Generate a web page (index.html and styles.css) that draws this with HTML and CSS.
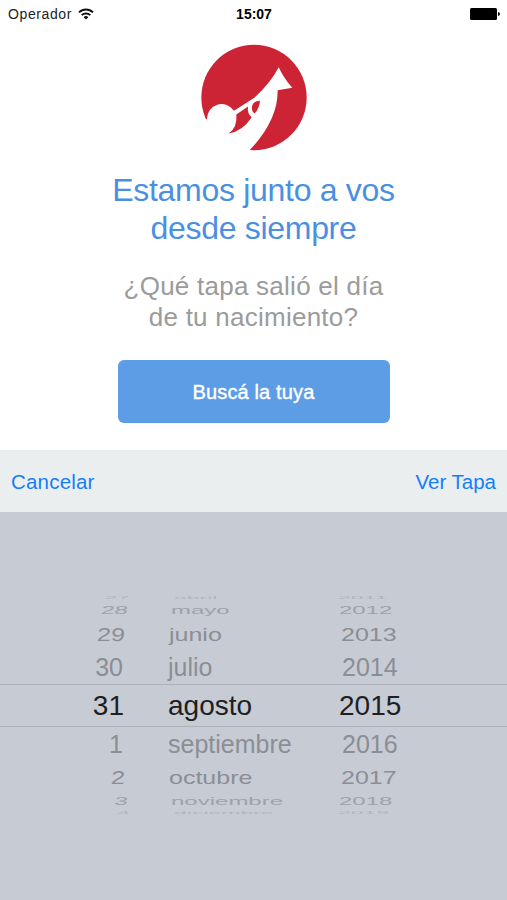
FILE: index.html
```html
<!DOCTYPE html>
<html lang="es">
<head>
  <meta charset="UTF-8">
  <meta name="viewport" content="width=device-width, initial-scale=1.0">
  <title>Buscá tu tapa</title>
  <link rel="stylesheet" href="styles.css">
</head>
<body>
  <header class="status-bar">
    <div class="carrier">
      <span>Operador</span>
      <svg class="wifi" viewBox="0 0 16 12" width="16" height="12" fill="none" stroke="#111" stroke-width="1.9">
        <path d="M1 4.4a10 10 0 0 1 14 0M3.7 7.2a6.1 6.1 0 0 1 8.6 0"/>
        <path d="M8 11.6L5.6 9.2a3.4 3.4 0 0 1 4.8 0z" fill="#111" stroke="none"/>
      </svg>
    </div>
    <span class="time">15:07</span>
    <svg class="battery" viewBox="0 0 30 12" width="30" height="12">
      <rect x="0" y="0" width="27" height="12" rx="1.5"/>
      <path d="M28 4q2 .4 2 2t-2 2z"/>
    </svg>
  </header>

  <main class="intro">
    <svg class="logo" viewBox="35 29 318 320" width="106" height="107">
      <circle cx="194" cy="189" r="158" fill="#cd2435"/>
      <path fill="#fff" d="M30 254H53A44 44 0 0 1 134 229L195 190Q246 142 268 98Q284 132 309 160L265 167Q266 260 178 350H30Z"/>
      <path fill="#cd2435" d="M141 240L176 216Q173 237 187 248Q160 290 118 297Q145 278 141 240Z"/>
      <path fill="#cd2435" d="M212 199Q211 220 196 237Q186 231 188 216Q191 199 212 199Z"/>
    </svg>
    <h1 class="title">Estamos junto a vos<br>desde siempre</h1>
    <p class="question">¿Qué tapa salió el día<br>de tu nacimiento?</p>
    <button class="search-button">Buscá la tuya</button>
  </main>

  <nav class="toolbar">
    <a class="cancel">Cancelar</a>
    <a class="accept">Ver Tapa</a>
  </nav>

  <section class="picker">
    <div class="wheel">
      <div class="row far"><span class="day">27</span><span class="month">abril</span><span class="year">2011</span></div>
      <div class="row third"><span class="day">28</span><span class="month">mayo</span><span class="year">2012</span></div>
      <div class="row second"><span class="day">29</span><span class="month">junio</span><span class="year">2013</span></div>
      <div class="row first"><span class="day">30</span><span class="month">julio</span><span class="year">2014</span></div>
      <div class="row selected"><span class="day">31</span><span class="month">agosto</span><span class="year">2015</span></div>
      <div class="row first"><span class="day">1</span><span class="month">septiembre</span><span class="year">2016</span></div>
      <div class="row second"><span class="day">2</span><span class="month">octubre</span><span class="year">2017</span></div>
      <div class="row third"><span class="day">3</span><span class="month">noviembre</span><span class="year">2018</span></div>
      <div class="row far"><span class="day">4</span><span class="month">diciembre</span><span class="year">2019</span></div>
    </div>
  </section>
</body>
</html>
```

FILE: styles.css
```css
* {
  box-sizing: border-box;
}

body {
  margin: 0;
  height: 900px;
  display: flex;
  flex-direction: column;
  overflow: hidden;
  background: #fff;
  font-family: "Liberation Sans", Arial, sans-serif;
}

.status-bar {
  height: 28px;
  padding: 0 7px 0 8px;
  display: grid;
  grid-template-columns: 1fr auto 1fr;
  align-items: center;
  font-size: 14px;
  color: #222;
}

.carrier {
  display: flex;
  align-items: center;
  gap: 6px;
  letter-spacing: 0.6px;
}

.time {
  font-weight: bold;
  color: #000;
}

.battery {
  justify-self: end;
}

.intro {
  height: 422px;
  padding-top: 16px;
  display: flex;
  flex-direction: column;
  align-items: center;
  text-align: center;
}

.title {
  margin: 20px 0 0;
  font-size: 32px;
  font-weight: normal;
  line-height: 38px;
  letter-spacing: -0.3px;
  color: #4a90e2;
}

.question {
  margin: 24px 0 0;
  font-size: 26px;
  line-height: 31px;
  letter-spacing: 0.25px;
  color: #9b9b9b;
}

.search-button {
  width: 272px;
  height: 63px;
  margin: 27px 0 0;
  padding: 2px 0 0;
  border: 0;
  border-radius: 6px;
  background: #5c9de5;
  color: #fff;
  font-family: inherit;
  font-size: 20px;
  letter-spacing: 0.15px;
  -webkit-text-stroke: 0.4px #fff;
}

.toolbar {
  height: 62px;
  padding: 2px 11px 0;
  display: flex;
  justify-content: space-between;
  align-items: center;
  background: #ebeeef;
  color: #147efb;
  font-size: 20.5px;
}

.cancel {
  letter-spacing: 0.2px;
}

.picker {
  flex: 1;
  padding-top: 83px;
  background: #c7cbd4;
}

/* rows get flatter and tilt away from the selected one */
.wheel {
  height: 220px;
  display: flex;
  flex-direction: column;
  justify-content: center;
  overflow: hidden;
}

.row {
  flex-shrink: 0;
  display: grid;
  grid-template-columns: 124px 1fr 168px;
  grid-template-rows: 100%;
  column-gap: 44px;
  align-items: center;
  font-size: 25px;
  line-height: 28px;
  color: #8b8e95;
}

.row span {
  height: 28px;
}

.day {
  text-align: right;
}

.selected {
  height: 43px;
  padding-top: 2px;
  border-top: 1px solid #aeb1b9;
  border-bottom: 1px solid #aeb1b9;
  font-size: 28px;
  color: #1d1f22;
}

.first {
  height: 34px;
}

.first .day {
  transform: translateX(-1px);
}

.first .year {
  transform: translateX(3px);
}

.second {
  height: 32px;
}

.second .day {
  transform: translateX(1px) scaleY(0.74) skewX(-4deg);
}

.second .month {
  transform: translateX(1px) scaleY(0.74);
}

.second .year {
  transform: translateX(2px) scaleY(0.74);
}

.third {
  height: 16px;
  font-size: 24px;
  color: #9fa2aa;
}

.third .day {
  transform: translateX(4px) scaleY(0.48) skewX(-6deg);
}

.third .month {
  transform: translateX(3px) scaleY(0.48);
}

.third .year {
  transform: scaleY(0.48);
}

.far {
  height: 8px;
  font-size: 23px;
  color: #b2b5bd;
}

.far .day {
  transform: translateX(6px) scaleY(0.18);
}

.far .month {
  transform: translateX(6px) scaleY(0.18);
}

.far .year {
  transform: translateX(-1px) scaleY(0.18);
}
```
